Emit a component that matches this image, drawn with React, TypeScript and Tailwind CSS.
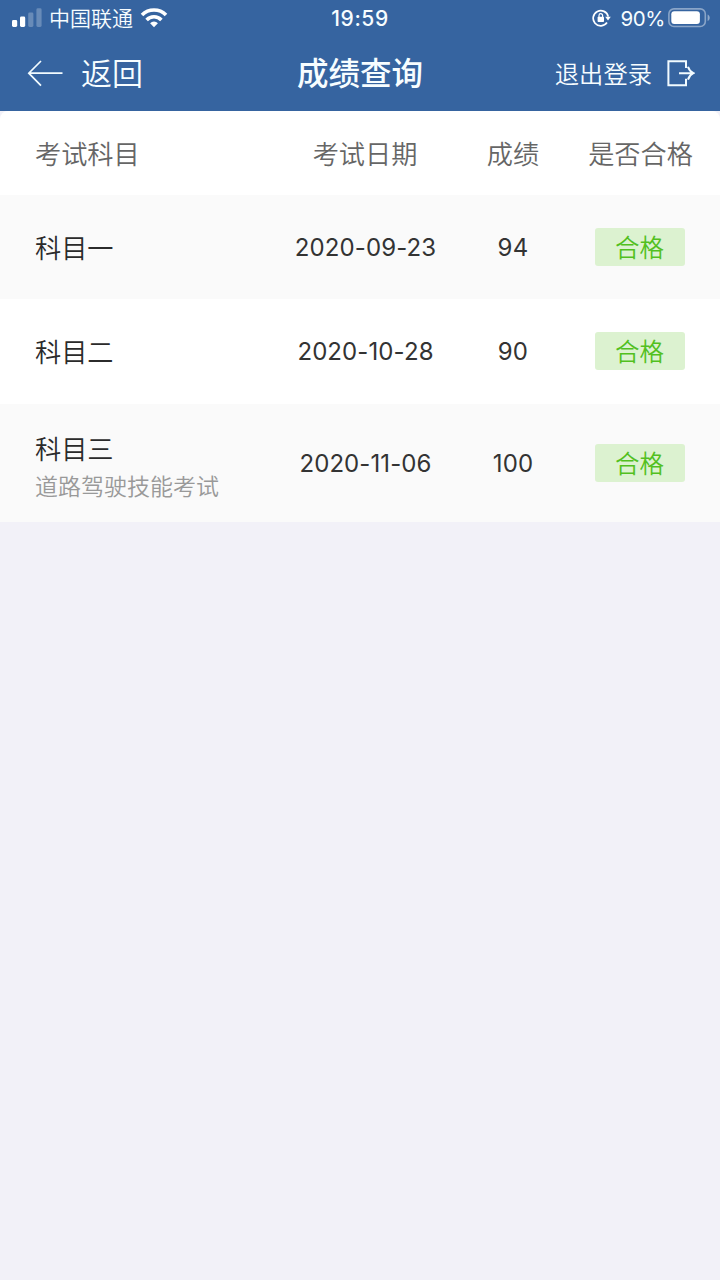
import React from 'react';
import clsx from 'clsx';

interface ExamResult {
  subject: string;
  note?: string;
  date: string;
  score: number;
  status: string;
}

const RESULTS: ExamResult[] = [
  { subject: '科目一', date: '2020-09-23', score: 94, status: '合格' },
  { subject: '科目二', date: '2020-10-28', score: 90, status: '合格' },
  { subject: '科目三', note: '道路驾驶技能考试', date: '2020-11-06', score: 100, status: '合格' },
];

const ROW_HEIGHTS = ['h-[104px]', 'h-[104.5px]', 'h-[118.5px]'];
const COLUMNS = 'grid grid-cols-[265px_200px_95px_160px] items-center';

function SignalIcon() {
  return (
    <svg width="30" height="20" viewBox="0 0 30 20" fill="#fff">
      <rect x="0" y="12" width="5.2" height="7" rx="1.4" />
      <rect x="8" y="8.5" width="5.2" height="10.5" rx="1.4" />
      <rect x="16.2" y="4.5" width="5.2" height="14.5" rx="1.4" opacity="0.25" />
      <rect x="24.4" y="0.3" width="5.2" height="18.7" rx="1.4" opacity="0.25" />
    </svg>
  );
}

function WifiIcon() {
  return (
    <svg width="28" height="20" viewBox="0 0 28 20" fill="none" stroke="#fff" strokeWidth="3.6">
      <path d="M2 7a17 17 0 0 1 24 0" />
      <path d="M6.6 11.9a10.4 10.4 0 0 1 14.8 0" />
      <path d="M14 19.3l-3.9-4.1a5.6 5.6 0 0 1 7.8 0z" fill="#fff" stroke="none" />
    </svg>
  );
}

function RotationLockIcon() {
  return (
    <svg width="20" height="18" viewBox="0 0 20 18" fill="none">
      <path d="M15 13.6A7.6 7.6 0 1 1 16.2 7.6" stroke="#fff" strokeWidth="1.7" />
      <path d="M13.2 7.8h5.6l-2.8 3.8z" fill="#fff" />
      <rect x="5.6" y="7.8" width="6.4" height="5.2" rx="0.8" fill="#fff" />
      <path d="M7 8.3V6.5a1.8 1.8 0 0 1 3.6 0v1.8" stroke="#fff" strokeWidth="1.2" />
    </svg>
  );
}

function BatteryIcon() {
  return (
    <svg width="43" height="20" viewBox="0 0 43 20" fill="none">
      <rect x="0.9" y="0.9" width="36.4" height="17.6" rx="5" stroke="#fff" strokeOpacity="0.42" strokeWidth="1.6" />
      <rect x="3.3" y="3.3" width="28.6" height="12.8" rx="3" fill="#fff" />
      <path d="M39.6 6.4c2.8 1.3 2.8 5.3 0 6.6z" fill="#fff" fillOpacity="0.45" />
    </svg>
  );
}

function BackArrow() {
  return (
    <svg width="36" height="28" viewBox="0 0 36 28" fill="none" stroke="#f2fbff" strokeWidth="1.7">
      <path d="M35.5 13.2H1.8M14 1L1.8 13.2 14 25.6" />
    </svg>
  );
}

function LogoutIcon() {
  return (
    <svg width="28" height="28" viewBox="0 0 28 28" fill="none" stroke="#f2fbff" strokeWidth="2">
      <path d="M19 8V1.2H1.4v24H19v-6.4" />
      <path d="M12 13.2h14M21 6.8q1.4 4.6 5.4 6.4-4 1.8-5.4 6.4" />
    </svg>
  );
}

function StatusBar() {
  return (
    <div className="grid h-9 grid-cols-3 items-center pr-[9px] pl-3">
      <div className="flex items-center">
        <SignalIcon />
        <span className="ml-[7px] pt-0.5 text-[21px] leading-[34px] font-[350] whitespace-nowrap">中国联通</span>
        <span className="ml-[7px]"><WifiIcon /></span>
      </div>
      <div className="pt-0.5 pr-[3px] text-center text-[21px] leading-[34px] font-medium tracking-[0.6px]">19:59</div>
      <div className="flex items-center justify-end">
        <RotationLockIcon />
        <span className="ml-2 pt-0.5 text-[20.5px] leading-[34px] tracking-[-0.4px]">90%</span>
        <span className="ml-[3px]"><BatteryIcon /></span>
      </div>
    </div>
  );
}

function NavBar() {
  return (
    <div className="grid h-[75px] grid-cols-3 items-center pr-[25px] pl-[27px]">
      <button className="flex items-center gap-[18px] text-left text-[31px] leading-none font-[350]">
        <BackArrow />
        返回
      </button>
      <h1 className="pt-px pr-[2px] text-center text-[31.5px] leading-none font-medium whitespace-nowrap">成绩查询</h1>
      <button className="flex items-center justify-end gap-[15px] text-[24.3px] leading-none font-[350] whitespace-nowrap">
        <span className="pt-0.5">退出登录</span>
        <LogoutIcon />
      </button>
    </div>
  );
}

export default function App() {
  return (
    <div className="min-h-screen w-[720px] bg-[#f2f1f8] font-['Inter','Noto_Sans_CJK_SC',sans-serif] text-[#333]">
      <header className="h-[111px] bg-[#3664a0] text-[#f7fdff]">
        <StatusBar />
        <NavBar />
      </header>

      <main className="overflow-hidden rounded-t-lg bg-white">
        <div className={clsx(COLUMNS, 'h-[84px] pt-[3px] text-[26.2px] font-[350] text-[#666]')}>
          <div className="pl-[35px]">考试科目</div>
          <div className="text-center">考试日期</div>
          <div className="pl-px text-center">成绩</div>
          <div className="pl-px text-center">是否合格</div>
        </div>

        {RESULTS.map((r, i) => (
          <div key={r.subject} className={clsx(COLUMNS, ROW_HEIGHTS[i], i % 2 === 0 && 'bg-[#fafafa]')}>
            <div className={clsx('pl-[35px] font-[350]', r.note ? 'pt-[10px]' : 'pt-[3px]')}>
              <div className="text-[26.2px] leading-[38px] text-[#2b2b2b]">{r.subject}</div>
              {r.note && <div className="text-[23px] leading-9 text-[#999]">{r.note}</div>}
            </div>
            <div className="pt-0.5 pl-px text-center text-[24px] tracking-[0.1px]">{r.date}</div>
            <div className="pt-0.5 pl-px text-center text-[24px] tracking-[0.2px]">{r.score}</div>
            <div className="flex justify-center">
              <span className="flex h-[38px] w-[90px] items-center justify-center rounded-[3px] bg-[#dcf2d0] pt-0.5 pr-px text-[24.5px] leading-none font-[350] text-[#52c01f]">
                {r.status}
              </span>
            </div>
          </div>
        ))}
      </main>
    </div>
  );
}
